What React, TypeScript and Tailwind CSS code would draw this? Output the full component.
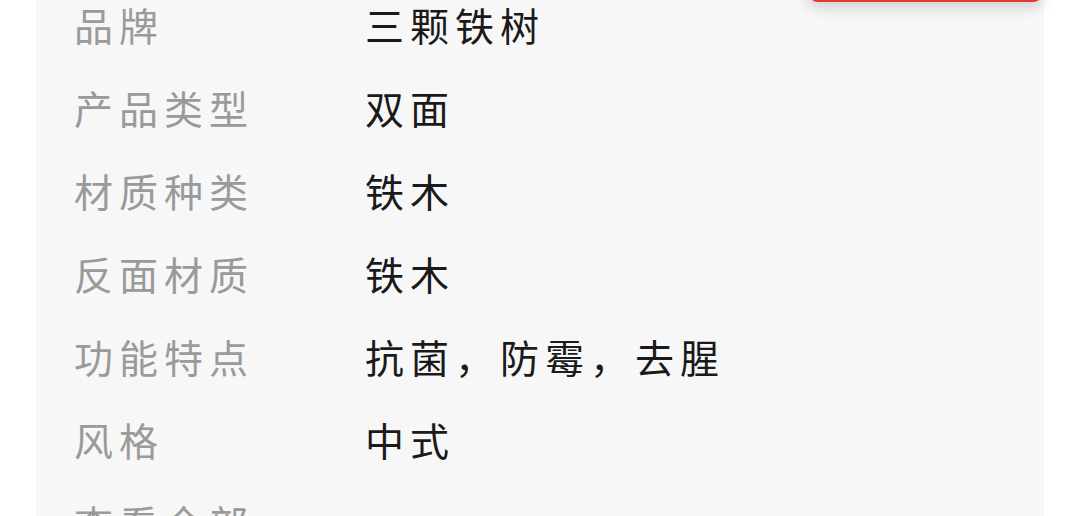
import React from "react";

const rows: [string, string][] = [
  ["品牌", "三颗铁树"],
  ["产品类型", "双面"],
  ["材质种类", "铁木"],
  ["反面材质", "铁木"],
  ["功能特点", "抗菌，防霉，去腥"],
  ["风格", "中式"],
];

export default function App() {
  return (
    <div
      className="relative w-[1080px] h-[516px] overflow-hidden bg-white"
      style={{ fontFamily: '"Noto Sans CJK SC", "Noto Sans", sans-serif' }}
    >
      <div className="ml-[36px] w-[1008px] h-full flex flex-col bg-[#f7f7f7]">
        <div className="mt-[-17px] flex flex-col">
          {rows.map(([k, v]) => (
            <div key={k} className="flex h-[83px] items-center">
              <div className="w-[329px] shrink-0 pl-[38px] text-[39px] tracking-[6px] text-[#9a9a9a] leading-none">
                {k}
              </div>
              <div className="text-[39px] tracking-[6px] text-[#1a1a1a] leading-none">{v}</div>
            </div>
          ))}
          <div className="flex h-[83px] items-center">
            <div className="pl-[38px] text-[39px] tracking-[6px] text-[#9a9a9a] leading-none">
              查看全部 ›
            </div>
          </div>
        </div>
      </div>
      <div className="absolute left-[808px] top-[-40px] w-[235px] h-[42px] rounded-[10px] bg-[#e03a30] shadow-[0_6px_14px_rgba(0,0,0,0.15)]" />
    </div>
  );
}
